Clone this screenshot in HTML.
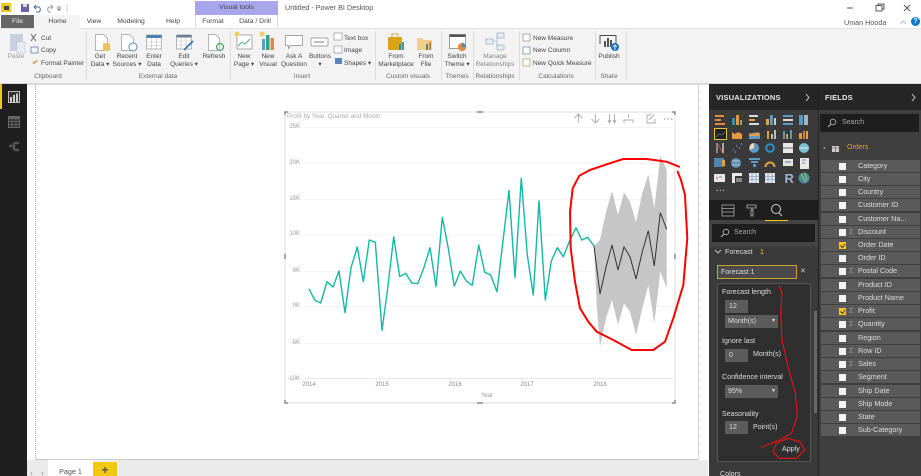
<!DOCTYPE html>
<html><head><meta charset="utf-8"><style>
html,body{margin:0;padding:0;background:#fff}
#r{position:relative;width:921px;height:476px;overflow:hidden;background:#fff;font-family:"Liberation Sans",sans-serif;font-size:6.5px;color:#444;filter:blur(.35px)}
#r div{position:absolute;white-space:nowrap}
.c{transform:translateX(-50%);text-align:center;line-height:8.3px}
.tb{font-size:6.8px}
.g{color:#666;top:73px;transform:translateX(-50%)}
.s{top:31px;width:1px;height:49px;background:#ddd}
.f{left:821px;width:99px;height:12px;background:#5a5a5a;color:#ddd;font-size:7.2px;line-height:12px}
.f b{position:absolute;left:18px;top:2.5px;width:7px;height:7px;background:#f4f4f4}
.f b.y{background:#f2c811}
.f i{position:absolute;left:28px;top:0;font-style:normal;color:#999}
.f span{position:absolute;left:37px}
.w{color:#ddd;font-size:7.1px}
.inp{background:#5c5c5c;color:#ddd;line-height:13px;height:13px;font-size:7.1px}
.y1{left:285px;color:#999;font-size:6px;line-height:8px;width:15px;text-align:right}
.x1{top:381px;color:#888;font-size:6px}
svg{position:absolute;left:0;top:0}
</style></head><body><div id="r">
<!-- ribbon -->
<div style="left:0;top:28px;width:921px;height:55px;background:#f3f3f3"></div>
<div style="left:0;top:28px;width:921px;height:1px;background:#e2e2e2"></div>
<div style="left:0;top:83px;width:921px;height:2px;background:#d8d8d8"></div>
<div style="left:1px;top:15px;width:33px;height:13px;background:#666;color:#eee;line-height:13px;text-align:center;font-size:6.8px">File</div>
<div style="left:35px;top:15px;width:45px;height:14px;background:#f3f3f3;line-height:13px;text-align:center;font-size:6.8px">Home</div>
<div style="left:195px;top:1px;width:83px;height:14px;background:#a9a6ee;line-height:14px;text-align:center;color:#444;font-size:6.8px">Visual tools</div>
<div style="left:195px;top:15px;width:83px;height:13px;background:#fff;border-left:1px solid #ddd;border-right:1px solid #ddd;box-sizing:border-box"></div>
<div class="c tb" style="left:94px;top:18px">View</div>
<div class="c tb" style="left:131px;top:18px">Modeling</div>
<div class="c tb" style="left:173px;top:18px">Help</div>
<div class="c tb" style="left:213px;top:18px">Format</div>
<div class="c tb" style="left:255px;top:18px">Data / Drill</div>
<div style="left:285px;top:3px;font-size:7.2px;line-height:10px;color:#555">Untitled - Power BI Desktop</div>
<div style="left:844px;top:18px;font-size:7.2px;color:#555">Uman Hooda</div>
<div style="left:911px;top:17px;width:9px;height:9px;border-radius:50%;background:#0b78d0;color:#fff;font:bold 7px/9px 'Liberation Sans',sans-serif;text-align:center">?</div>

<div class="c" style="left:16px;top:53px;color:#999">Paste</div>
<div style="left:41px;top:32.500px;color:#444;line-height:12.6px">Cut<br>Copy<br>Format Painter</div>
<div class="g" style="left:48px">Clipboard</div>
<div class="s" style="left:86px"></div>
<div class="c" style="left:100px;top:53px">Get<br>Data ▾</div>
<div class="c" style="left:127px;top:53px">Recent<br>Sources ▾</div>
<div class="c" style="left:154px;top:53px">Enter<br>Data</div>
<div class="c" style="left:184px;top:53px">Edit<br>Queries ▾</div>
<div class="c" style="left:214px;top:53px">Refresh</div>
<div class="g" style="left:158px">External data</div>
<div class="s" style="left:230px"></div>
<div class="c" style="left:244px;top:53px">New<br>Page ▾</div>
<div class="c" style="left:268px;top:53px">New<br>Visual</div>
<div class="c" style="left:294px;top:53px">Ask A<br>Question</div>
<div class="c" style="left:320px;top:53px">Buttons<br>▾</div>
<div style="left:344px;top:32.500px;line-height:12.6px">Text box<br>Image<br>Shapes ▾</div>
<div class="g" style="left:302px">Insert</div>
<div class="s" style="left:375px"></div>
<div class="c" style="left:396px;top:53px">From<br>Marketplace</div>
<div class="c" style="left:426px;top:53px">From<br>File</div>
<div class="g" style="left:408px">Custom visuals</div>
<div class="s" style="left:441px"></div>
<div class="c" style="left:457px;top:53px">Switch<br>Theme ▾</div>
<div class="g" style="left:457px">Themes</div>
<div class="s" style="left:473px"></div>
<div class="c" style="left:495px;top:53px;color:#888">Manage<br>Relationships</div>
<div class="g" style="left:495px">Relationships</div>
<div class="s" style="left:519px"></div>
<div style="left:533px;top:32.500px;line-height:12.6px">New Measure<br>New Column<br>New Quick Measure</div>
<div class="g" style="left:556px">Calculations</div>
<div class="s" style="left:595px"></div>
<div class="c" style="left:609px;top:53px">Publish</div>
<div class="g" style="left:609px">Share</div>
<div class="s" style="left:626px"></div>

<!-- left rail -->
<div style="left:0;top:84px;width:27px;height:392px;background:#1f1f1f"></div>
<div style="left:0;top:84px;width:2px;height:25px;background:#f2c811"></div>

<!-- tabs -->
<div style="left:27px;top:460px;width:681px;height:16px;background:#ebebeb"></div>
<div style="left:48px;top:460px;width:45px;height:16px;background:#fff;color:#555;font-size:7.2px;line-height:23px;text-align:center">Page 1</div>
<div style="left:93px;top:462px;width:24px;height:14px;background:#f2c811;color:#555;font:bold 12px/17px 'Liberation Sans',sans-serif;text-align:center">+</div>

<!-- page -->
<div style="left:35px;top:85px;width:664px;height:375px;box-sizing:border-box;border-left:1px dotted #aaa;border-bottom:1px solid #ccc;border-right:1px dotted #bbb"></div>

<!-- chart text -->
<div style="left:287px;top:112.500px;color:#aaa;font-size:6.3px">Profit by Year, Quarter and Month</div>
<div class="y1" style="top:123px">25K</div>
<div class="y1" style="top:159px">20K</div>
<div class="y1" style="top:195px">15K</div>
<div class="y1" style="top:230px">10K</div>
<div class="y1" style="top:267px">5K</div>
<div class="y1" style="top:302px">0K</div>
<div class="y1" style="top:339px">-5K</div>
<div class="y1" style="top:375px">-10K</div>
<div class="c x1" style="left:309px">2014</div>
<div class="c x1" style="left:382px">2015</div>
<div class="c x1" style="left:455px">2016</div>
<div class="c x1" style="left:527px">2017</div>
<div class="c x1" style="left:600px">2018</div>
<div class="c" style="left:487px;top:392px;color:#999;font-size:6px">Year</div>

<!-- right panels -->
<div style="left:709px;top:84px;width:110px;height:392px;background:#3a3a3a"></div>
<div style="left:819px;top:84px;width:102px;height:392px;background:#3f3f3f"></div>
<div style="left:709px;top:84px;width:212px;height:26px;background:#262626"></div>
<div style="left:818px;top:84px;width:1px;height:392px;background:#222"></div>
<div style="left:709px;top:200px;width:109px;height:20px;background:#1f1f1f"></div>
<div style="left:709px;top:220px;width:109px;height:27px;background:#444"></div>
<div style="left:716px;top:93px;color:#e8e8e8;font:bold 7.5px/10px 'Liberation Sans',sans-serif;letter-spacing:.2px">VISUALIZATIONS</div>
<div style="left:825px;top:93px;color:#e8e8e8;font:bold 7.5px/10px 'Liberation Sans',sans-serif;letter-spacing:.2px">FIELDS</div>
<div style="left:820px;top:114px;width:99px;height:18px;background:#1e1e1e;color:#aaa;font-size:7px;line-height:18px;text-indent:22px">Search</div>
<div style="left:847px;top:144px;color:#d5a92a;font-size:7px">Orders</div>
<div style="left:712px;top:224px;width:103px;height:18px;background:#1e1e1e;color:#aaa;font-size:7px;line-height:18px;text-indent:22px">Search</div>
<div style="left:725px;top:247.500px;color:#ddd;font-size:7.1px">Forecast</div>
<div style="left:760px;top:247.500px;color:#f2c811;font-size:7.1px">1</div>
<div style="left:717px;top:265px;width:80px;height:14px;box-sizing:border-box;border:1px solid #c8a52c;background:#4a4a4a;color:#ddd;line-height:12px;text-indent:3px;font-size:7.1px">Forecast 1</div>
<div style="left:800px;top:267px;color:#ccc;font-size:7px">✕</div>
<div style="left:717px;top:283px;width:94px;height:179px;box-sizing:border-box;border:1px solid #555;background:#2f2f2f"></div>
<div class="w" style="left:722px;top:288px">Forecast length</div>
<div class="inp" style="left:725px;top:300px;width:23px;text-indent:4px">12</div>
<div class="inp" style="left:725px;top:315px;width:53px;text-indent:3px">Month(s)<span style="position:absolute;left:44px;font-size:6px">▾</span></div>
<div class="w" style="left:722px;top:337px">Ignore last</div>
<div class="inp" style="left:725px;top:349px;width:23px;text-indent:4px">0</div>
<div class="w" style="left:753px;top:350px">Month(s)</div>
<div class="w" style="left:722px;top:373px">Confidence interval</div>
<div class="inp" style="left:725px;top:385px;width:53px;text-indent:3px">95%<span style="position:absolute;left:44px;font-size:6px">▾</span></div>
<div class="w" style="left:722px;top:410px">Seasonality</div>
<div class="inp" style="left:725px;top:421px;width:23px;text-indent:4px">12</div>
<div class="w" style="left:753px;top:423px">Point(s)</div>
<div class="w" style="left:782px;top:445px">Apply</div>
<div style="left:814px;top:311px;width:3px;height:102px;background:#666"></div>
<div class="w" style="left:720px;top:470px">Colors</div>

<!-- fields -->
<div class="f" style="top:160px"><b></b><span>Category</span></div>
<div class="f" style="top:173px"><b></b><span>City</span></div>
<div class="f" style="top:186px"><b></b><span>Country</span></div>
<div class="f" style="top:199px"><b></b><span>Customer ID</span></div>
<div class="f" style="top:213px"><b></b><span>Customer Na...</span></div>
<div class="f" style="top:226px"><b></b><i>Σ</i><span>Discount</span></div>
<div class="f" style="top:239px"><b class="y"></b><span>Order Date</span></div>
<div class="f" style="top:252px"><b></b><span>Order ID</span></div>
<div class="f" style="top:265px"><b></b><i>Σ</i><span>Postal Code</span></div>
<div class="f" style="top:279px"><b></b><span>Product ID</span></div>
<div class="f" style="top:292px"><b></b><span>Product Name</span></div>
<div class="f" style="top:305px"><b class="y"></b><i>Σ</i><span>Profit</span></div>
<div class="f" style="top:318px"><b></b><i>Σ</i><span>Quantity</span></div>
<div class="f" style="top:332px"><b></b><span>Region</span></div>
<div class="f" style="top:345px"><b></b><i>Σ</i><span>Row ID</span></div>
<div class="f" style="top:358px"><b></b><i>Σ</i><span>Sales</span></div>
<div class="f" style="top:371px"><b></b><span>Segment</span></div>
<div class="f" style="top:385px"><b></b><span>Ship Date</span></div>
<div class="f" style="top:398px"><b></b><span>Ship Mode</span></div>
<div class="f" style="top:411px"><b></b><span>State</span></div>
<div class="f" style="top:424px"><b></b><span>Sub-Category</span></div>
<div style="left:716px;top:185px;color:#ccc;font:bold 8px/8px 'Liberation Sans',sans-serif;letter-spacing:1px">...</div>
<div style="left:784.500px;top:172px;color:#9fb4d0;font:bold 13px/14px 'Liberation Sans',sans-serif">R</div>

<svg width="921" height="476" viewBox="0 0 921 476" fill="none">
<!-- checks -->
<path d="M840.500 245.500l2 2 2.500-3.500M840.500 311.500l2 2 2.500-3.500" stroke="#333" stroke-width=".9"/>
<!-- title bar icons -->
<rect x="1" y="3" width="10" height="9" fill="#f2c811"/><rect x="4" y="6" width="5" height="4" fill="#444"/>
<rect x="21" y="4" width="8" height="8" fill="#6b5fa8"/><rect x="23" y="4" width="4" height="3" fill="#ddd"/>
<path d="M34 7h5a3 3 0 0 1 0 5h-3M34 7l2-2M34 7l2 2" stroke="#4a6ea8"/>
<path d="M53 7h-4a3 3 0 0 0 0 5h2M53 7l-2-2M53 7l-2 2" stroke="#a0a0a0"/>
<path d="M57 7h4M57.5 9h3l-1.5 1.5z" stroke="#666" stroke-width=".7"/><path d="M67 4v8" stroke="#ccc"/>
<path d="M847 8h6" stroke="#555"/><rect x="876" y="5.500" width="6" height="5.500" stroke="#555"/><path d="M878 5.500v-1.500h6v5h-2" stroke="#555"/><path d="M904 5l6 6M910 5l-6 6" stroke="#555"/>
<path d="M900 24l3-3 3 3" stroke="#bbb"/>
<!-- ribbon icons -->
<rect x="10" y="34" width="13" height="17" fill="#c6d0e2"/><rect x="17" y="42" width="8" height="11" fill="#e8ecf4" stroke="#b7c2d6" stroke-width=".5"/>
<path d="M31 34l5 7M36 34l-5 7" stroke="#666"/><rect x="31" y="47" width="7" height="6" stroke="#5b83b8" stroke-width=".8"/>
<path d="M32 63l5-3 1 1-4 3z" fill="#caa24a"/>
<path d="M95.500 34.500h8l4 4v12h-12z" fill="#fff" stroke="#999" stroke-width=".7"/><rect x="103" y="43" width="7" height="8" rx="1.500" fill="#eec25e"/>
<path d="M121.500 34.500h8l4 4v12h-12z" fill="#fff" stroke="#999" stroke-width=".7"/><circle cx="133" cy="47" r="4" fill="#fff" stroke="#5f89b5"/>
<rect x="146.500" y="35" width="15" height="14" fill="#fff" stroke="#999" stroke-width=".7"/><rect x="146.500" y="35" width="15" height="3" fill="#4d7fb5"/><path d="M147 42h14M147 45.500h14M151.500 38v11M156.500 38v11" stroke="#bbb" stroke-width=".6"/>
<rect x="176.500" y="35" width="15" height="14" fill="#fff" stroke="#999" stroke-width=".7"/><rect x="176.500" y="35" width="15" height="2.500" fill="#6a7f95"/><path d="M177 41h14M177 45h14M181 37v12M186 37v12" stroke="#bbb" stroke-width=".6"/><path d="M184 50l9-9" stroke="#2f77b8" stroke-width="1.800"/>
<path d="M208.500 34.500h7l4 4v12h-11z" fill="#fff" stroke="#999" stroke-width=".7"/><circle cx="220" cy="47" r="3.500" stroke="#4fa36f" stroke-width="1.300"/>
<rect x="237" y="35" width="15" height="14" fill="#fff" stroke="#888" stroke-width=".7"/><path d="M238 46l4-4 3 2 5-5" stroke="#4cae82"/><circle cx="237" cy="34" r="2.500" fill="#f0d060"/>
<rect x="262" y="39" width="3" height="11" fill="#5a9bc8"/><rect x="266" y="35" width="3.500" height="15" fill="#2fa58a"/><rect x="270.500" y="38" width="3.500" height="12" fill="#e08a4a"/><circle cx="262" cy="34" r="2.500" fill="#f0d060"/>
<path d="M285.500 35.500h17v10h-12l-2 3v-3h-3z" fill="#fff" stroke="#888" stroke-width=".7"/>
<rect x="311" y="38" width="17" height="8" rx="1" fill="#fff" stroke="#888" stroke-width=".7"/><path d="M314 42h10" stroke="#5b7fb0"/>
<rect x="334" y="33" width="8" height="7" fill="#fff" stroke="#888" stroke-width=".6"/><rect x="334" y="46" width="8" height="7" fill="#fff" stroke="#5b83b8" stroke-width=".6"/><rect x="335" y="58" width="7" height="6" fill="#5b83b8"/>
<rect x="388" y="37" width="14" height="13" rx="1" fill="#d9a415"/><path d="M392 37v-3h6v3" stroke="#c9a84f"/><rect x="399" y="44" width="2" height="6" fill="#3a8f7a"/><rect x="402" y="42" width="2" height="8" fill="#5f88b0"/>
<path d="M417 38h5l2 2h8v10h-15z" fill="#f1cf8c"/><rect x="426" y="44" width="2" height="6" fill="#3a8f7a"/><rect x="429" y="42" width="2" height="8" fill="#d07f3c"/>
<rect x="449.500" y="34.500" width="16" height="14" fill="#fff" stroke="#777" stroke-width=".7"/><rect x="449.500" y="34.500" width="16" height="2.500" fill="#555"/><circle cx="462" cy="47" r="4" fill="#e58a3c"/><path d="M462 47v-4a4 4 0 0 1 4 4z" fill="#3f8fc0"/>
<g stroke="#9fb3cc" stroke-width=".8" fill="#e6edf5"><rect x="486" y="39" width="7" height="5"/><rect x="497" y="33" width="7" height="5"/><rect x="497" y="45" width="7" height="5"/></g><path d="M493 41h4M497 35v13" stroke="#9fb3cc" stroke-width=".7"/>
<rect x="523" y="34" width="7" height="7" fill="#fff" stroke="#8a8a8a" stroke-width=".7"/><rect x="523" y="47" width="7" height="7" fill="#fff" stroke="#6787a8" stroke-width=".7"/><rect x="523" y="59" width="7" height="7" fill="#fff" stroke="#b09a5a" stroke-width=".7"/>
<path d="M600 44v-8.500h16v8" stroke="#444" stroke-width=".9"/><rect x="604" y="41" width="2" height="6" fill="#555"/><rect x="607" y="38" width="2" height="9" fill="#555"/><rect x="610" y="40" width="2" height="7" fill="#555"/><circle cx="615" cy="47" r="4" fill="#1b72b8"/><path d="M615 50v-5M613 47l2-2 2 2" stroke="#fff" stroke-width=".8"/>

<!-- left rail icons -->
<rect x="8.500" y="91.500" width="11" height="11" stroke="#bbb" fill="#333"/><rect x="10" y="97" width="2" height="5" fill="#ccc"/><rect x="13" y="95" width="2" height="7" fill="#ccc"/><rect x="16" y="93.500" width="2" height="8.500" fill="#ccc"/>
<rect x="8.500" y="116.500" width="11" height="11" stroke="#666" fill="#333"/><path d="M8 119h12v-2H8z" fill="#666"/><path d="M12 117v11M16 117v11M8 121.500h12M8 124.500h12" stroke="#666" stroke-width=".8"/>
<path d="M9 146h5M14 143h5M14 150h5M14 143v7" stroke="#555" stroke-width="2.500"/>

<!-- chart frame -->
<rect x="285" y="112" width="390" height="291" stroke="#dcdcdc"/>
<g stroke="#888" stroke-width="1.500"><path d="M285 115v-3h3M285 400v3h3M675 115v-3h-3M675 400v3h-3"/><path d="M477 112h6M477 403h6M285 254v5M675 254v5"/></g>
<g stroke="#f3f3f3"><path d="M304 127.500h369M304 163.500h369M304 199.500h369M304 235.500h369M304 271.500h369M304 306.500h369M304 343.500h369"/></g><path d="M304 378.500h369" stroke="#e8e8e8"/>
<g stroke="#aaa" stroke-width=".9"><path d="M578.500 123v-9M574.500 118l4-4 4 4M595.500 114v9M591.500 119l4 4 4-4M609.500 114v9M614.500 114v9M608 120l1.500 3 1.500-3M613 120l1.500 3 1.500-3M628.500 114v4M624 123v-3h9v3M651 115h-4v8h8v-4M649 120l5-5"/></g>
<path d="M664 119h1.500M667.500 119h1.500M671 119h1.500" stroke="#888"/>
<!-- band -->
<path d="M594 246 600 240 606 212 612 191 618 215 624 192.300 630 201.700 636 222.300 642.300 193.300 648.300 174.300 654.300 208.300 660.300 155.700 666.700 170 666.700 287.700 660.300 271.700 654.300 323.300 648.300 285 642.300 308.300 636 335 630 311.700 624 303.300 618 325 612 300 606 318.300 600 346.700 596.700 305Z" fill="#c6c6c6"/>
<polyline points="309,289 315,300.300 320.700,303 327,281.700 333,287 339,271 345,312.700 351,267.700 357.300,247 363.300,281.700 369.300,240 375.300,242.300 382,330.300 387.700,288.300 393.700,237 399.700,276.700 405.700,273.300 411.700,283 417.700,283.700 423.700,268.300 430,247.700 436,286.700 442.300,217.300 448.300,248.300 454.300,286.300 460.300,271 466.300,281 472.300,285.300 478.700,245 484.700,272.300 490.700,275 497,291.700 509,190.300 515,277.700 521.300,178.300 527.300,255 533.300,295 539,201 545.300,300 551.300,261 557.300,247.700 563.300,256.700 569.300,241.700 576,227.700 581.700,240 587.700,237.300 594,246" stroke="#14b8a6" stroke-width="1.400" stroke-linejoin="round"/>
<polyline points="594,246 600,294 606,267.300 612,245 618,270 624,247 630,256.700 636,279 642.300,251.700 648.300,230.700 654.300,266 660.300,212.700 666.700,229.300" stroke="#333" stroke-width="1"/>
<!-- red circle -->
<polyline points="679,166.700 666.700,161.700 646.700,159 623.300,159 606.700,164.300 590,170 579.300,175.700 572.700,188.300 570,211.700 570.700,248.300 575,281.700 580,308.300 588.300,321.700 596.700,331.700 613.300,340 631.700,350 653.300,350 665,341.700 673.300,318.300 683.300,285 687.300,238.300 685,195 681,180 677.700,171.700" stroke="#f00" stroke-width="2" stroke-linejoin="round" stroke-linecap="round"/>
<!-- red line -->
<polyline points="779,285 782,293.300 780.700,313.300 782,340 788,366.700 795.300,393.300 797.300,416.700 791.300,433.300 779.700,440 761.300,447.300" stroke="#f01010" stroke-width="1.100" stroke-linejoin="round"/>
<path d="M776.300 443.300 788 438.300 799.700 441.700 804.700 450 796.300 458.300 779.700 458.300 773 451.700Z" stroke="#f01010" stroke-width="1.100" stroke-linejoin="round"/>
<!-- panel chevrons & search -->
<path d="M806 94l3 3.500-3 3.500M912 94l3 3.500-3 3.500" stroke="#bbb"/>
<circle cx="833" cy="122" r="2.800" stroke="#bbb" stroke-width=".8"/><path d="M831 124l-3 3" stroke="#bbb"/>
<circle cx="726" cy="232" r="2.800" stroke="#bbb" stroke-width=".8"/><path d="M724 234l-3 3" stroke="#bbb"/>
<path d="M715 250l3 3 3-3" stroke="#bbb"/><path d="M823 149l2-2v2z" fill="#bbb"/><rect x="832" y="146" width="7" height="6" fill="#ccc"/><path d="M832 148h7M835.500 146v6" stroke="#555" stroke-width=".6"/>
<!-- tool tabs -->
<rect x="722" y="205" width="12" height="11" stroke="#aaa" stroke-width=".8"/><path d="M722 208.500h12M722 212h12" stroke="#aaa" stroke-width=".7"/>
<path d="M747 205h9v3h-9zM752 208v2M751 210h2v6h-2z" stroke="#bbb" stroke-width=".8"/>
<circle cx="776" cy="209" r="4.500" stroke="#ccc"/><path d="M779 213l3 3" stroke="#ccc"/>
<path d="M765 220.500h23" stroke="#f2c811"/>
<path d="M32 472l-1 1.500 1 1.500M42 472l1 1.500-1 1.500" stroke="#aaa"/>
<!-- viz icons -->
<g transform="translate(0,-2)">
<path d="M715 117h9v2h-9zM715 121h6v2h-6zM715 125h10v2h-10z" fill="#e08a3a"/>
<rect x="732" y="120" width="3" height="7" fill="#3a8fb5"/><rect x="736" y="117" width="3" height="10" fill="#e8983a"/><rect x="740" y="122" width="2" height="5" fill="#9a9a9a"/>
<path d="M749 117h9v2h-9zM749 125h10v2h-10z" fill="#d9d9d9"/><path d="M749 121h6v2h-6z" fill="#e5a33f"/>
<rect x="766" y="121" width="3" height="6" fill="#e5a33f"/><rect x="770" y="117" width="3" height="10" fill="#5b9ac4"/><rect x="774" y="120" width="2" height="7" fill="#ccc"/>
<path d="M783 117h10v2h-10zM783 125h10v2h-10z" fill="#5b9ac4"/><path d="M783 121h10v2h-10z" fill="#ddd"/>
<rect x="799" y="117" width="4" height="10" fill="#5b9ac4"/><rect x="804" y="117" width="4" height="10" fill="#9ab8d0"/>
<rect x="714.500" y="130.500" width="12" height="11" fill="#222" stroke="#e3c23c"/><path d="M716 139l3-3 3 1 3-3" stroke="#777" stroke-width=".7"/>
<path d="M732 141v-7l3 2 3-2 4 2v5z" fill="#e79a43"/><path d="M749 141v-6l3 1 3-2 3 2 2-1v6z" fill="#5b9ac4"/><path d="M749 137l3-2 3 1 3-2 2 2-1 2h-10z" fill="#e8a03e"/>
<rect x="767" y="133" width="2" height="8" fill="#e89a3a"/><rect x="771" y="136" width="2" height="5" fill="#bbb"/><rect x="774" y="132" width="2" height="9" fill="#bbb"/>
<rect x="783" y="133" width="2" height="8" fill="#5b9ac4"/><rect x="786" y="136" width="2" height="5" fill="#e89a3a"/><rect x="790" y="132" width="2" height="9" fill="#5b9ac4"/>
<rect x="799" y="135" width="3" height="6" fill="#e89a3a"/><rect x="803" y="133" width="2" height="8" fill="#d97a3a"/><rect x="806" y="133" width="2" height="8" fill="#e8a03e"/>
<rect x="716" y="145" width="2" height="10" fill="#888"/><rect x="722" y="145" width="2" height="10" fill="#aaa"/><path d="M718 146l4 8" stroke="#c0552f"/>
<path d="M733 152h1M736 148h1M739 150h1M741 146h1M735 154h1" stroke="#6a9bc0" stroke-width="1.500"/>
<circle cx="754" cy="150" r="5" fill="#5b9ac4"/><path d="M754 150v-5a5 5 0 0 0-4 7z" fill="#f0d8b0"/>
<circle cx="770" cy="150" r="3.800" stroke="#2f8fd0" stroke-width="2"/>
<rect x="783" y="145" width="10" height="10" fill="#e8e8e8"/><path d="M783 150h10" stroke="#666"/>
<circle cx="804" cy="150" r="5" fill="#7cc0d4"/><path d="M799 150h10" stroke="#e8e8e8"/>
</g>
<rect x="714" y="158" width="10" height="9" fill="#4f86ad"/><rect x="722" y="160" width="3" height="6" fill="#e0a23e"/>
<circle cx="736" cy="163" r="5" fill="#5b8fb5"/><path d="M732 161h8M732 165h8" stroke="#ddd" stroke-width=".7"/>
<path d="M749 158h11v2h-11zM751 161h7v2h-7zM753 164h3v3h-3z" fill="#5b9ac4"/>
<path d="M765.500 167a4.500 4.500 0 0 1 9 0" stroke="#e5a33f" stroke-width="2"/><rect x="783" y="159" width="10" height="7" fill="#e5e5e5"/><path d="M785 162h6" stroke="#4a7aa0"/>
<rect x="800" y="158" width="9" height="11" fill="#e8e8e8"/><path d="M802 160h4M802 163h3" stroke="#5b8fb5"/>
<g transform="translate(0,2)">
<rect x="714" y="172" width="11" height="8" fill="#e8e8e8"/><path d="M716 176h2" stroke="#d04a3a"/><path d="M719 175h3" stroke="#4a9a6a"/>
<path d="M732 171h10v3h-10zM732 174h3v7h-3z" fill="#e8e8e8"/><path d="M736 176h6v4h-6z" fill="#888"/>
<g fill="#dfe6ee"><rect x="749" y="171" width="10" height="10"/><rect x="765" y="171" width="10" height="10"/></g><path d="M749 174.500h10M749 177.500h10M752 171v10M756 171v10M765 174.500h10M765 177.500h10M768 171v10M772 171v10" stroke="#6a8fb0" stroke-width=".6"/>
<circle cx="804" cy="176" r="5.500" fill="#4e8c9c"/><path d="M801 172l5 8M805 171l2 7" stroke="#7bbf7a" stroke-width="1.200"/>
</g>
</svg>
</div></body></html>
